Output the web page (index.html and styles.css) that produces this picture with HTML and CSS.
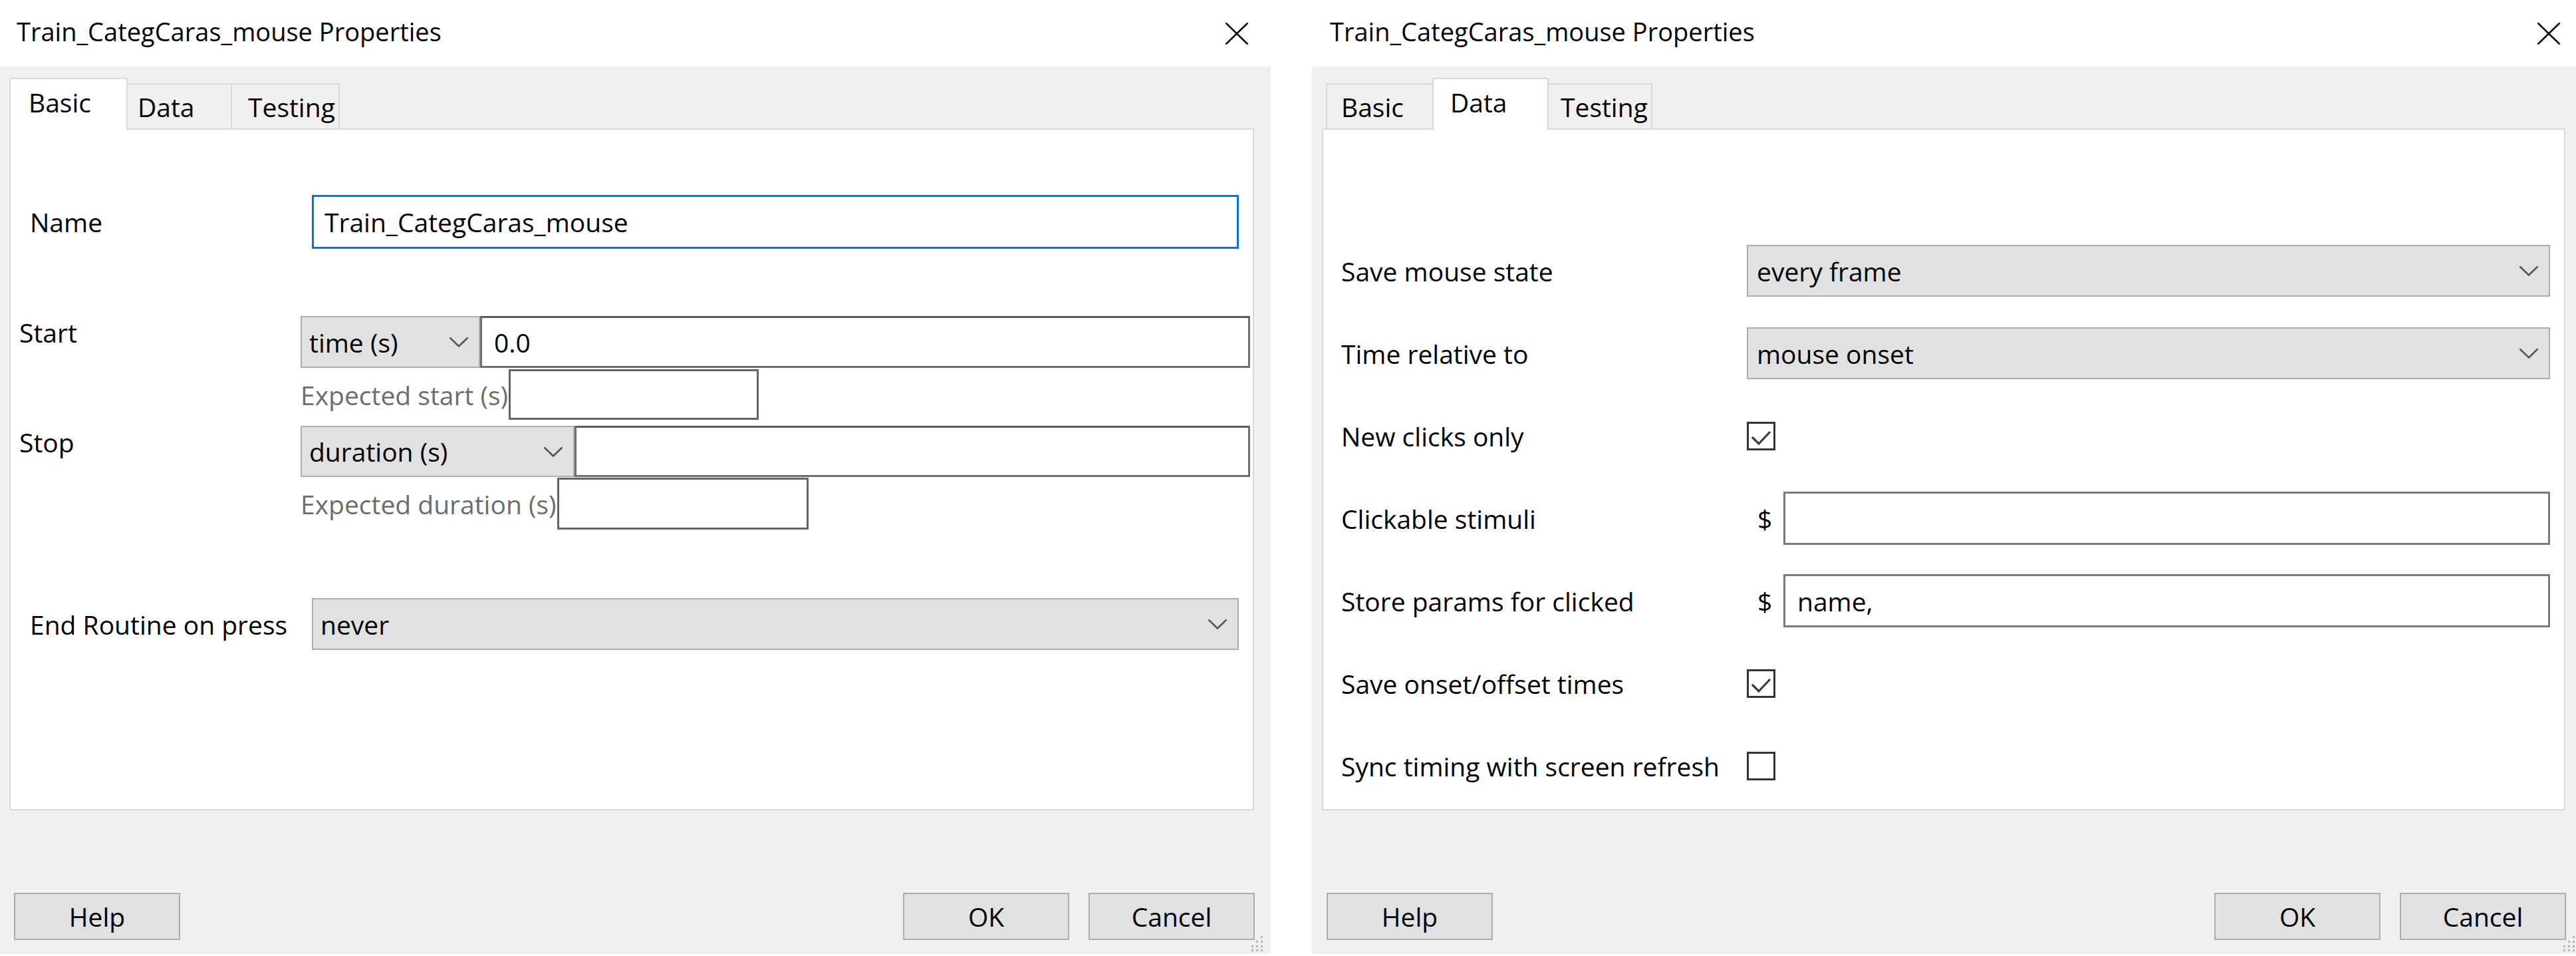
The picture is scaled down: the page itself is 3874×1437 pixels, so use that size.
FILE: index.html
```html
<!DOCTYPE html>
<html lang="en">
<head>
<meta charset="utf-8">
<title>Train_CategCaras_mouse Properties</title>
<link rel="stylesheet" href="styles.css">
</head>
<body>
<div class="screen">

  <section class="dialog">
    <header class="titlebar">
      <span class="title">Train_CategCaras_mouse Properties</span>
      <svg class="close" viewBox="0 0 36 35" aria-hidden="true"><path d="M1.5 1.5 L34.5 33.5 M34.5 1.5 L1.5 33.5" /></svg>
    </header>
    <div class="body">
      <nav class="tabs">
        <div class="tab tab-basic active">Basic</div>
        <div class="tab tab-data">Data</div>
        <div class="tab tab-testing">Testing</div>
      </nav>
      <div class="panel basic">
        <div class="row-name">
          <label class="lbl lbl-wide">Name</label>
          <div class="textbox focused">Train_CategCaras_mouse</div>
        </div>

        <div class="timing timing-start">
          <label class="lbl lbl-timing">Start</label>
          <div class="ctrl-col">
            <div class="combo-row">
              <div class="select select-start"><span>time (s)</span><svg class="chev" viewBox="0 0 30 16"><polyline points="1.5,1.5 15,14.5 28.5,1.5"/></svg></div>
              <div class="textbox textbox-dark">0.0</div>
            </div>
            <div class="expected-row">
              <span class="expected">Expected start (s)</span>
              <div class="box box-start"></div>
            </div>
          </div>
        </div>

        <div class="timing timing-stop">
          <label class="lbl lbl-timing">Stop</label>
          <div class="ctrl-col">
            <div class="combo-row">
              <div class="select select-stop"><span>duration (s)</span><svg class="chev" viewBox="0 0 30 16"><polyline points="1.5,1.5 15,14.5 28.5,1.5"/></svg></div>
              <div class="textbox textbox-dark"></div>
            </div>
            <div class="expected-row expected-row-stop">
              <span class="expected">Expected duration (s)</span>
              <div class="box box-stop"></div>
            </div>
          </div>
        </div>

        <div class="row-end">
          <label class="lbl lbl-wide">End Routine on press</label>
          <div class="select select-wide"><span>never</span><svg class="chev" viewBox="0 0 30 16"><polyline points="1.5,1.5 15,14.5 28.5,1.5"/></svg></div>
        </div>
      </div>
      <div class="buttons">
        <div class="btn">Help</div>
        <div class="btn btn-ok">OK</div>
        <div class="btn">Cancel</div>
      </div>
    </div>
    <svg class="grip" viewBox="0 0 27 27" aria-hidden="true">
      <rect x="21" y="3" width="3" height="3"/><rect x="21" y="10" width="3" height="3"/><rect x="14" y="10" width="3" height="3"/>
      <rect x="21" y="17" width="3" height="3"/><rect x="14" y="17" width="3" height="3"/><rect x="7" y="17" width="3" height="3"/>
      <rect x="21" y="23" width="3" height="3"/><rect x="14" y="23" width="3" height="3"/><rect x="7" y="23" width="3" height="3"/>
    </svg>
  </section>

  <section class="dialog dialog-right">
    <header class="titlebar">
      <span class="title">Train_CategCaras_mouse Properties</span>
      <svg class="close" viewBox="0 0 36 35" aria-hidden="true"><path d="M1.5 1.5 L34.5 33.5 M34.5 1.5 L1.5 33.5" /></svg>
    </header>
    <div class="body">
      <nav class="tabs">
        <div class="tab tab-basic">Basic</div>
        <div class="tab tab-data active">Data</div>
        <div class="tab tab-testing">Testing</div>
      </nav>
      <div class="panel data">
        <div class="data-row">
          <label class="lbl">Save mouse state</label>
          <div class="select select-data"><span>every frame</span><svg class="chev" viewBox="0 0 30 16"><polyline points="1.5,1.5 15,14.5 28.5,1.5"/></svg></div>
        </div>
        <div class="data-row">
          <label class="lbl">Time relative to</label>
          <div class="select select-data"><span>mouse onset</span><svg class="chev" viewBox="0 0 30 16"><polyline points="1.5,1.5 15,14.5 28.5,1.5"/></svg></div>
        </div>
        <div class="data-row">
          <label class="lbl">New clicks only</label>
          <div class="check"><svg viewBox="0 0 37 37"><polyline points="5,20 15,30 32,12"/></svg></div>
        </div>
        <div class="data-row">
          <label class="lbl">Clickable stimuli</label>
          <div class="dollar-field"><span class="dollar">$</span><div class="textbox textbox-data"></div></div>
        </div>
        <div class="data-row">
          <label class="lbl">Store params for clicked</label>
          <div class="dollar-field"><span class="dollar">$</span><div class="textbox textbox-data">name,</div></div>
        </div>
        <div class="data-row">
          <label class="lbl">Save onset/offset times</label>
          <div class="check"><svg viewBox="0 0 37 37"><polyline points="5,20 15,30 32,12"/></svg></div>
        </div>
        <div class="data-row">
          <label class="lbl">Sync timing with screen refresh</label>
          <div class="check"></div>
        </div>
      </div>
      <div class="buttons">
        <div class="btn">Help</div>
        <div class="btn btn-ok">OK</div>
        <div class="btn">Cancel</div>
      </div>
    </div>
    <svg class="grip" viewBox="0 0 27 27" aria-hidden="true">
      <rect x="21" y="3" width="3" height="3"/><rect x="21" y="10" width="3" height="3"/><rect x="14" y="10" width="3" height="3"/>
      <rect x="21" y="17" width="3" height="3"/><rect x="14" y="17" width="3" height="3"/><rect x="7" y="17" width="3" height="3"/>
      <rect x="21" y="23" width="3" height="3"/><rect x="14" y="23" width="3" height="3"/><rect x="7" y="23" width="3" height="3"/>
    </svg>
  </section>

</div>
</body>
</html>
```

FILE: styles.css
```css
* { box-sizing: border-box; }

html, body {
  margin: 0;
  padding: 0;
  background: #ffffff;
}

body {
  width: 3874px;
  height: 1437px;
  overflow: hidden;
  font-family: "Open Sans", "Noto Sans", "DejaVu Sans", sans-serif;
  font-size: 39px;
  color: #000;
}

.screen {
  display: flex;
  gap: 62px;
  width: 3874px;
  height: 1437px;
  overflow: hidden;
}

.dialog {
  position: relative;
  flex: 0 0 1911px;
  width: 1911px;
  height: 1434px;
  display: flex;
  flex-direction: column;
}

/* title bar */
.titlebar {
  flex: 0 0 100px;
  height: 100px;
  background: #fff;
  display: flex;
  align-items: center;
  justify-content: space-between;
  padding: 0 33px 6px 25px;
}
.dialog-right .titlebar { padding-left: 27px; }

.title { white-space: nowrap; font-size: 38px; }

.close { width: 36px; height: 35px; margin-top: 6px; }
.close path { stroke: #111; stroke-width: 2.6; fill: none; }

/* gray body */
.body {
  flex: 1;
  background: #f0f0f0;
  padding: 17px 25px 0 14px;
  display: flex;
  flex-direction: column;
}
.dialog-right .body { padding-left: 15px; padding-right: 26px; }

/* tabs */
.tabs {
  display: flex;
  align-items: flex-end;
  height: 78px;
  flex: 0 0 78px;
  margin-bottom: -2px;
  padding-left: 6px;
  position: relative;
  z-index: 1;
}
.tab {
  height: 68px;
  margin-bottom: 2px;
  display: flex;
  align-items: center;
  padding-left: 21px;
  background: #f0f0f0;
  border: 2px solid #d9d9d9;
  border-bottom: none;
  white-space: nowrap;
  position: relative;
}
.tab + .tab { border-left: none; }
.tab-basic { width: 166px; }
.tab-data { width: 163px; }
.tab-testing { width: 162px; padding-left: 24px; }
.tab.active {
  height: 78px;
  margin: 0 -6px;
  margin-bottom: 0;
  padding-left: 27px;
  padding-bottom: 8px;
  background: #fff;
  border-left: 2px solid #d9d9d9;
  z-index: 2;
}
.tab-basic.active { width: 178px; }
.tab-data.active { width: 175px; padding-left: 25px; }

/* panel */
.panel {
  flex: 0 0 1025px;
  height: 1025px;
  background: #fff;
  border: 2px solid #d9d9d9;
}

.lbl { white-space: nowrap; }

/* Basic tab */
.basic {
  padding: 98px 4px 0 0;
  display: flex;
  flex-direction: column;
}
.row-name,
.row-end {
  display: flex;
  align-items: center;
  margin-right: 17px;
}
.row-name { height: 81px; }
.row-end { height: 78px; margin-top: 103px; }
.lbl-wide { flex: 0 0 453px; padding-left: 29px; }

.textbox {
  flex: 1;
  height: 100%;
  background: #fff;
  border: 3px solid #7a7a7a;
  display: flex;
  align-items: center;
  padding-left: 16px;
  white-space: nowrap;
}
.textbox.focused { border: 3px solid #0078d7; }
.textbox-dark { border-color: #6e6e6e; border-top-color: #5a5a5a; padding-left: 18px; }

.timing {
  display: flex;
  align-items: flex-start;
}
.timing-start { margin-top: 101px; }
.timing-stop { margin-top: 9px; }
.lbl-timing {
  flex: 0 0 436px;
  padding-left: 13px;
  line-height: 50px;
}
.ctrl-col {
  flex: 1;
  display: flex;
  flex-direction: column;
}
.combo-row { display: flex; height: 78px; }
.timing-stop .combo-row { height: 77px; }

.select {
  height: 100%;
  background: #e1e1e1;
  border: 2px solid #adadad;
  display: flex;
  align-items: center;
  justify-content: space-between;
  padding: 0 15px 0 11px;
  white-space: nowrap;
}
.select-start { flex: 0 0 270px; }
.select-stop { flex: 0 0 412px; }
.select-wide { flex: 1; }
.select-data { width: 100%; height: 78px; padding-left: 13px; }

.chev { width: 30px; height: 16px; flex: 0 0 30px; }
.chev polyline { fill: none; stroke: #555; stroke-width: 2.6; }

.expected-row {
  display: flex;
  align-items: center;
  gap: 1px;
  margin-top: 2px;
}
.expected-row-stop { margin-top: 1px; gap: 1px; }
.expected { color: #6d6d6d; white-space: nowrap; }
.box {
  background: #fff;
  border: 3px solid #646464;
}
.box-start { width: 376px; height: 76px; }
.box-stop { width: 378px; height: 78px; }

/* buttons */
.buttons {
  margin-top: 124px;
  display: flex;
  gap: 29px;
  padding-left: 7px;
  margin-right: -1px;
}
.btn {
  width: 250px;
  height: 71px;
  background: #e1e1e1;
  border: 2px solid #adadad;
  display: flex;
  align-items: center;
  justify-content: center;
}
.btn-ok { margin-left: auto; }

/* Data tab */
.data {
  padding: 150px 21px 0 27px;
  display: flex;
  flex-direction: column;
}
.data-row {
  display: grid;
  grid-template-columns: 610px 1fr;
  align-items: center;
  height: 124px;
}
.check {
  width: 43px;
  height: 43px;
  border: 3px solid #333;
  background: #fff;
}
.check svg { display: block; width: 37px; height: 37px; }
.check polyline { fill: none; stroke: #3a3a3a; stroke-width: 3.2; }

.dollar-field { display: flex; align-items: center; height: 80px; }
.dollar { width: 21px; margin-left: 16px; margin-right: 18px; }
.textbox-data { height: 80px; padding-left: 18px; }

/* resize grip */
.grip {
  position: absolute;
  right: 9px;
  bottom: 3px;
  width: 27px;
  height: 27px;
}
.grip rect { fill: #b5b5b5; }
```
